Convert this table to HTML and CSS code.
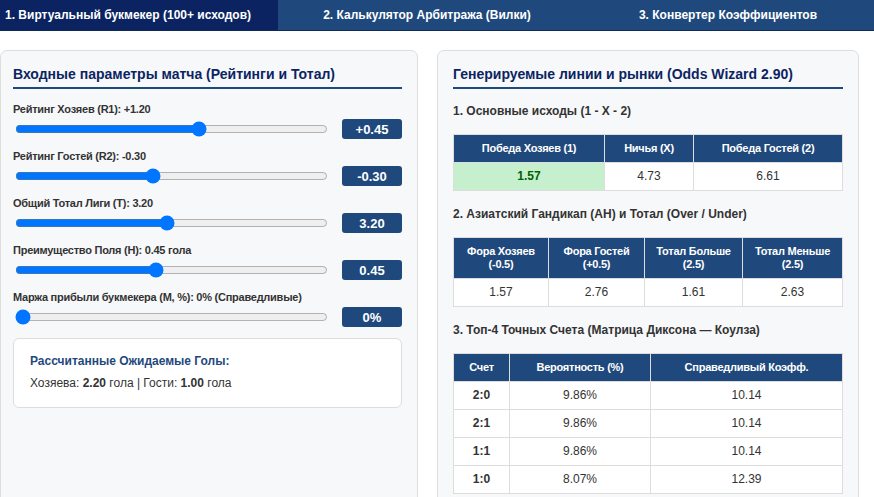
FILE: index.html
```html
<!DOCTYPE html>
<html lang="ru">
<head>
<meta charset="utf-8">
<title>Odds Wizard</title>
<link rel="stylesheet" href="styles.css">
</head>
<body>
<nav class="tabs">
  <div class="tab tab-active">1. Виртуальный букмекер (100+ исходов)</div>
  <div class="tab">2. Калькулятор Арбитража (Вилки)</div>
  <div class="tab tab-last">3. Конвертер Коэффициентов</div>
</nav>
<main class="layout">
  <section class="panel panel-left">
    <h2 class="panel-title">Входные параметры матча (Рейтинги и Тотал)</h2>
    <div class="param">
      <div class="param-label">Рейтинг Хозяев (R1): +1.20</div>
      <div class="param-row"><input class="slider" type="range" min="0" max="1000" value="592"><span class="value">+0.45</span></div>
    </div>
    <div class="param">
      <div class="param-label">Рейтинг Гостей (R2): -0.30</div>
      <div class="param-row"><input class="slider" type="range" min="0" max="1000" value="439"><span class="value">-0.30</span></div>
    </div>
    <div class="param">
      <div class="param-label">Общий Тотал Лиги (T): 3.20</div>
      <div class="param-row"><input class="slider" type="range" min="0" max="1000" value="485"><span class="value">3.20</span></div>
    </div>
    <div class="param">
      <div class="param-label">Преимущество Поля (H): 0.45 гола</div>
      <div class="param-row"><input class="slider" type="range" min="0" max="1000" value="449"><span class="value">0.45</span></div>
    </div>
    <div class="param">
      <div class="param-label">Маржа прибыли букмекера (M, %): 0% (Справедливые)</div>
      <div class="param-row"><input class="slider" type="range" min="0" max="1000" value="0"><span class="value">0%</span></div>
    </div>
    <div class="result-box">
      <div class="result-title">Рассчитанные Ожидаемые Голы:</div>
      <div class="result-text">Хозяева: <b>2.20</b> гола | Гости: <b>1.00</b> гола</div>
    </div>
  </section>
  <section class="panel panel-right">
    <h2 class="panel-title">Генерируемые линии и рынки (Odds Wizard 2.90)</h2>
    <h3 class="section-title section-first">1. Основные исходы (1 - X - 2)</h3>
    <table class="odds t1">
      <tr><th>Победа Хозяев (1)</th><th>Ничья (X)</th><th>Победа Гостей (2)</th></tr>
      <tr><td class="best">1.57</td><td>4.73</td><td>6.61</td></tr>
    </table>
    <h3 class="section-title">2. Азиатский Гандикап (АН) и Тотал (Over / Under)</h3>
    <table class="odds t2">
      <tr><th>Фора Хозяев<br>(-0.5)</th><th>Фора Гостей<br>(+0.5)</th><th>Тотал Больше<br>(2.5)</th><th>Тотал Меньше<br>(2.5)</th></tr>
      <tr><td>1.57</td><td>2.76</td><td>1.61</td><td>2.63</td></tr>
    </table>
    <h3 class="section-title">3. Топ-4 Точных Счета (Матрица Диксона — Коулза)</h3>
    <table class="odds t3">
      <tr><th>Счет</th><th>Вероятность (%)</th><th>Справедливый Коэфф.</th></tr>
      <tr><td class="score">2:0</td><td>9.86%</td><td>10.14</td></tr>
      <tr><td class="score">2:1</td><td>9.86%</td><td>10.14</td></tr>
      <tr><td class="score">1:1</td><td>9.86%</td><td>10.14</td></tr>
      <tr><td class="score">1:0</td><td>8.07%</td><td>12.39</td></tr>
    </table>
  </section>
</main>
</body>
</html>
```
FILE: styles.css
```css
* { box-sizing: border-box; }
html, body { margin: 0; padding: 0; background: #ffffff; }
body {
  font-family: "Liberation Sans", Arial, sans-serif;
  color: #333333;
  overflow: hidden;
}
.tabs {
  display: grid;
  grid-template-columns: 278px 298px 1fr;
  height: 31px;
  background: #1f497d;
  border-bottom: 1px solid #0e2a57;
}
.tab {
  display: flex;
  align-items: center;
  justify-content: center;
  color: #ffffff;
  font-size: 12px;
  font-weight: bold;
  white-space: nowrap;
}
.tab-active {
  background: #0b2461;
  justify-content: flex-start;
  padding-left: 5px;
}
.tab-last { padding-left: 6px; }
.layout {
  display: grid;
  grid-template-columns: 418px 422px;
  column-gap: 19px;
  margin-top: 19px;
  align-items: start;
}
.panel {
  background: #f7f8fa;
  border: 1px solid #dddddd;
  border-radius: 7px;
  height: 470px;
  padding: 14px 15px 0 12px;
}
.panel-right { padding-left: 15px; }
.panel-title {
  margin: 0;
  font-size: 14px;
  line-height: 18px;
  font-weight: bold;
  color: #0b2461;
  padding-bottom: 4px;
  border-bottom: 2px solid #1f497d;
}
.panel-left .panel-title { margin-bottom: 13px; }
.param { margin-bottom: 10px; }
.param-label {
  font-size: 11px;
  line-height: 14px;
  font-weight: bold;
  letter-spacing: -0.25px;
  color: #333333;
  margin-bottom: 3px;
}
.param-row {
  display: flex;
  align-items: center;
  gap: 12px;
  height: 20px;
}
.slider {
  flex: 1;
  margin: 0 2px;
  min-width: 0;
}
.value {
  width: 60px;
  height: 20px;
  border-radius: 3px;
  background: #1f497d;
  color: #ffffff;
  font-size: 13px;
  font-weight: bold;
  display: flex;
  align-items: center;
  justify-content: center;
}
.result-box {
  margin-top: 11px;
  background: #ffffff;
  border: 1px solid #dddddd;
  border-radius: 6px;
  height: 70px;
  padding: 14px 16px 0;
}
.result-title {
  font-size: 12px;
  line-height: 16px;
  font-weight: bold;
  color: #1f497d;
  margin-bottom: 7px;
}
.result-text {
  font-size: 12px;
  line-height: 15px;
  color: #333333;
}
.section-title {
  margin: 16px 0;
  font-size: 12px;
  line-height: 14px;
  font-weight: bold;
  color: #333333;
}
.section-first { margin-top: 15px; }
.odds {
  width: 100%;
  border-collapse: collapse;
  table-layout: fixed;
  font-size: 12px;
  background: #ffffff;
}
.odds th, .odds td {
  border: 1px solid #dddddd;
  padding: 7px 4px;
  line-height: 13px;
  text-align: center;
}
.odds th {
  background: #1f497d;
  color: #ffffff;
  font-weight: bold;
  font-size: 11px;
  letter-spacing: -0.25px;
}
.odds td { color: #333333; }
.odds td.best {
  background: #c6efce;
  color: #006100;
  font-weight: bold;
}
.odds td.score { font-weight: bold; }
.t1 th:nth-child(1) { width: 151px; }
.t1 th:nth-child(2) { width: 89px; }
.t2 th:nth-child(1) { width: 95px; }
.t2 th:nth-child(2) { width: 96px; }
.t2 th:nth-child(3) { width: 98px; }
.t3 th:nth-child(1) { width: 56px; }
.t3 th:nth-child(2) { width: 141px; }
```
